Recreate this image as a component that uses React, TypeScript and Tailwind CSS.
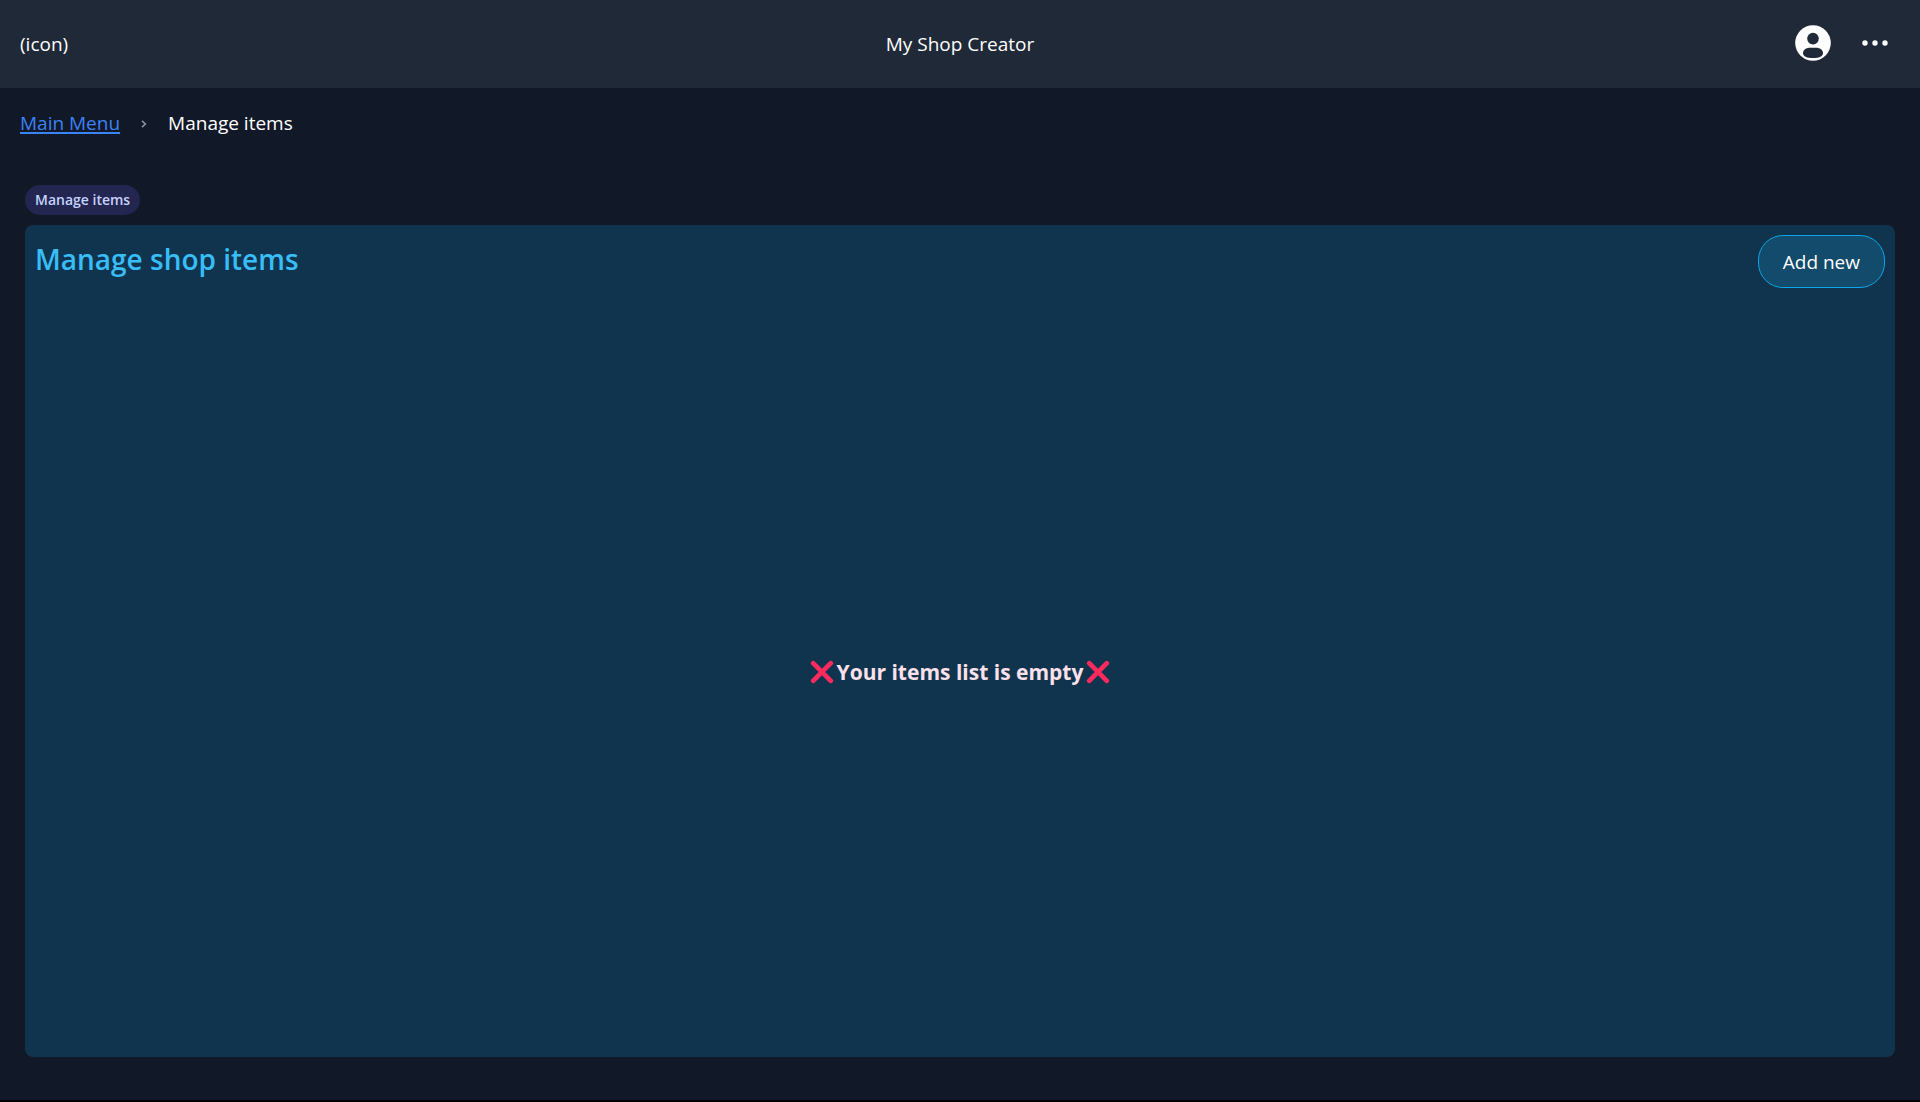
import React from "react";

function AvatarIcon() {
  return (
    <svg viewBox="0 0 36 36" className="size-9" aria-hidden="true">
      <circle cx="18" cy="18" r="17.8" fill="#fff" />
      <circle cx="18" cy="13.6" r="5.8" fill="#1f2937" />
      <path d="M8 28.2C8 25 11 22.8 15 22.8H21C25 22.8 28 25 28 28.2C28 31.4 24 33 18 33S8 31.4 8 28.2Z" fill="#1f2937" />
    </svg>
  );
}

function DotsIcon() {
  return (
    <svg viewBox="0 0 30 30" className="size-[30px]" fill="currentColor" aria-hidden="true">
      <circle cx="5" cy="15" r="2.7" />
      <circle cx="15" cy="15" r="2.7" />
      <circle cx="25" cy="15" r="2.7" />
    </svg>
  );
}

function ChevronIcon() {
  return (
    <svg viewBox="0 0 6 8" className="h-2 w-1.5" fill="none" stroke="#8b919c" strokeWidth="1.6" aria-hidden="true">
      <path d="M1 0.8L4.4 4L1 7.2" />
    </svg>
  );
}

function CrossIcon() {
  return (
    <svg viewBox="0 0 24 24" className="size-6" fill="none" stroke="#ff2b5e" strokeWidth="4.6" strokeLinecap="round" aria-hidden="true">
      <path d="M3.2 3.2L20.8 20.8M20.8 3.2L3.2 20.8" />
    </svg>
  );
}

export default function App() {
  return (
    <div className="flex min-h-screen flex-col border-b-2 border-black bg-[#111827] font-['Open_Sans','Noto_Sans',sans-serif] text-[19px] leading-[30px] text-white">
      <header className="grid h-[88px] grid-cols-3 items-center bg-[#1f2937] px-5">
        <span>(icon)</span>
        <span className="text-center">My Shop Creator</span>
        <div className="flex items-center justify-end gap-[29px] pr-[10px] pb-0.5">
          <button type="button" aria-label="Account"><AvatarIcon /></button>
          <button type="button" aria-label="More options"><DotsIcon /></button>
        </div>
      </header>
      <nav aria-label="Breadcrumb" className="px-5 pt-5">
        <ol className="flex items-center">
          <li><a href="#" className="text-[#3b82f6] underline decoration-2 underline-offset-2">Main Menu</a></li>
          <li aria-hidden="true" className="px-[21px] pt-0.5"><ChevronIcon /></li>
          <li aria-current="page">Manage items</li>
        </ol>
      </nav>
      <main className="flex grow flex-col px-[25px] pt-[47px] pb-[43px]">
        <span className="mb-[10px] self-start rounded-full bg-[#222650] px-[10px] text-[14px] font-semibold text-[#c7d2fe]">Manage items</span>
        <section className="flex grow flex-col rounded-lg bg-[#10344d] p-[10px]">
          <div className="flex items-start justify-between">
            <h1 className="text-[28px] leading-[48px] font-semibold text-[#38bdf8]">Manage shop items</h1>
            <button type="button" className="h-[53px] rounded-[25px] border border-[#0ea5e9] bg-[#124b6c] px-6">Add new</button>
          </div>
          <div className="flex grow items-center justify-center gap-[3px] pt-2 text-[21px] font-bold text-[#fce0ea]">
            <CrossIcon />
            <p>Your items list is empty</p>
            <CrossIcon />
          </div>
        </section>
      </main>
    </div>
  );
}
